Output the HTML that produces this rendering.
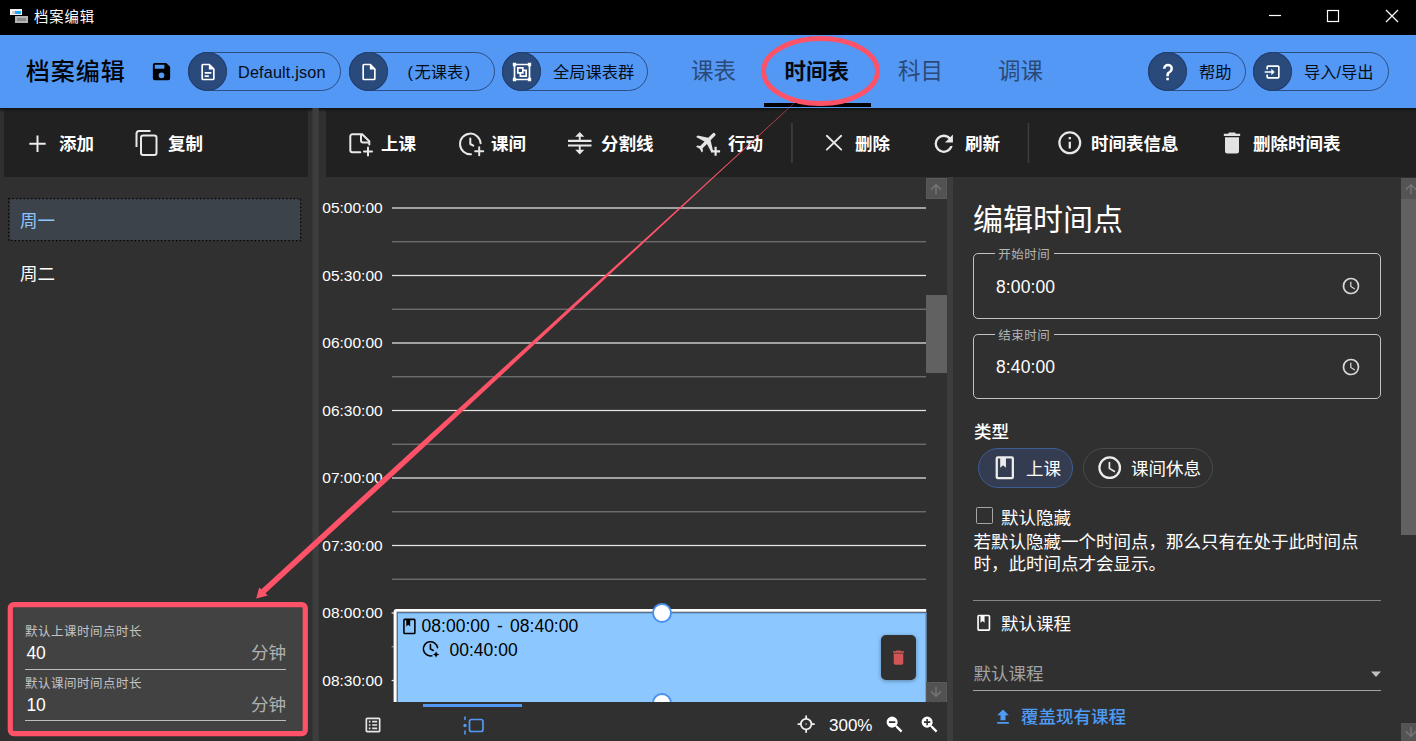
<!DOCTYPE html>
<html lang="zh-CN">
<head>
<meta charset="utf-8">
<title>档案编辑</title>
<style>
*{box-sizing:border-box;margin:0;padding:0}
html,body{width:1416px;height:741px;overflow:hidden;background:#303030}
body{font-family:"Liberation Sans","Noto Sans CJK SC",sans-serif;color:#fff;position:relative}
.abs{position:absolute}
.t{position:absolute;white-space:nowrap;line-height:1}
svg{position:absolute;overflow:visible}
#titlebar{left:0;top:0;width:1416px;height:35px;background:#000}
#header{left:0;top:35px;width:1416px;height:73px;background:#5398f5;box-shadow:0 1px 3px rgba(0,0,0,.55)}
.chip{position:absolute;top:52px;height:39.300px;border:1px solid #2d4e84;border-radius:20px}
.chip i{position:absolute;left:-1px;top:-1px;width:39.300px;height:39.300px;border-radius:20px;background:#2a4a7c;box-shadow:inset 0 0 0 1px #223f70}
.chip span{position:absolute;top:11px;font-size:16.25px;line-height:1;color:#060c18;white-space:nowrap}
.tab{font-size:22.5px;color:#2b4a78}
.tbar{background:#212121}
.tb{font-size:17.5px;font-weight:bold;color:#fff;top:136px}
.tl{font-size:15.5px;color:#fff;left:322.3px}
.hl{position:absolute;left:392px;width:534px;height:1.400px}
.maj{background:#dedede}
.min{background:#707070}
</style>
</head>
<body>
<!-- window title bar -->
<div id="titlebar" class="abs"></div>
<div class="abs" style="left:10px;top:9px;width:12px;height:6.400px;background:#f2f2f2"></div>
<div class="abs" style="left:11.500px;top:10.600px;width:3px;height:3.600px;background:#cfcfcf"></div>
<div class="abs" style="left:15.200px;top:10.600px;width:6.300px;height:3.600px;background:#1ea7f5"></div>
<div class="abs" style="left:15.200px;top:16px;width:12.800px;height:6.500px;background:#b4b4b4"></div>
<div class="abs" style="left:16.800px;top:17.600px;width:9.700px;height:3.300px;background:#8c8c8c"></div>
<div class="t" style="left:33.900px;top:9.500px;font-size:14.300px;letter-spacing:1px;color:#fff">档案编辑</div>
<svg style="left:1263px;top:4px" width="150" height="26" viewBox="0 0 150 26">
  <path d="M6 11.5H18" stroke="#fff" stroke-width="1.2" fill="none"/>
  <rect x="64.5" y="6.5" width="11" height="11" stroke="#fff" stroke-width="1.2" fill="none"/>
  <path d="M123 6L135 18M135 6L123 18" stroke="#fff" stroke-width="1.2" fill="none"/>
</svg>

<!-- header -->
<div id="header" class="abs"></div>
<div class="t" style="left:25.800px;top:60.200px;font-size:24px;letter-spacing:1px;font-weight:500;color:#02040a">档案编辑</div>
<svg style="left:150px;top:60px" width="23" height="23" viewBox="0 0 24 24"><path fill="#000" d="M15,9H5V5H15M12,19A3,3 0 0,1 9,16A3,3 0 0,1 12,13A3,3 0 0,1 15,16A3,3 0 0,1 12,19M17,3H5C3.89,3 3,3.9 3,5V19A2,2 0 0,0 5,21H19A2,2 0 0,0 21,19V7L17,3Z"/></svg>

<div class="chip" style="left:188px;width:153px"><i></i><span style="left:49px;letter-spacing:.15px">Default.json</span></div>
<div class="chip" style="left:349px;width:146px"><i></i><span style="left:57.500px">(<b style="font-weight:normal;margin:0 1.500px">无课表</b>)</span></div>
<div class="chip" style="left:502px;width:146px"><i></i><span style="left:50px">全局课表群</span></div>
<div class="chip" style="left:1148px;width:98px"><i></i><span style="left:50px">帮助</span></div>
<div class="chip" style="left:1253px;width:136px"><i></i><span style="left:50px">导入/导出</span></div>
<svg style="left:198px;top:62px" width="20" height="20" viewBox="0 0 24 24"><path fill="#fff" d="M6,2A2,2 0 0,0 4,4V20A2,2 0 0,0 6,22H18A2,2 0 0,0 20,20V8L14,2H6M6,4H13V9H18V20H6V4M8,12V14H16V12H8M8,16V18H13V16H8Z"/></svg>
<svg style="left:359px;top:62px" width="20" height="20" viewBox="0 0 24 24"><path fill="#fff" d="M14,2H6A2,2 0 0,0 4,4V20A2,2 0 0,0 6,22H18A2,2 0 0,0 20,20V8L14,2M18,20H6V4H13V9H18V20Z"/></svg>
<svg style="left:512px;top:62px" width="20" height="20" viewBox="0 0 24 24"><path fill="#fff" d="M1,1V5H2V19H1V23H5V22H19V23H23V19H22V5H23V1H19V2H5V1M5,4H19V5H20V19H19V20H5V19H4V5H5M6,6V14H9V18H18V9H14V6M8,8H12V12H8M14,11H16V16H11V14H14"/></svg>
<svg style="left:1158px;top:62px" width="20" height="20" viewBox="0 0 24 24"><path fill="#fff" d="M10,19H13V22H10V19M12,2C17.35,2.22 19.68,7.62 16.5,11.67C15.67,12.67 14.33,13.33 13.67,14.17C13,15 13,16 13,17H10C10,15.33 10,13.92 10.67,12.92C11.33,11.92 12.67,11.33 13.5,10.67C15.92,8.43 15.32,5.26 12,5A3,3 0 0,0 9,8H6A6,6 0 0,1 12,2Z"/></svg>
<svg style="left:1263px;top:62px" width="20" height="20" viewBox="0 0 24 24"><path fill="#fff" d="M14,12L10,8V11H2V13H10V16M20,18V6C20,4.89 19.1,4 18,4H6A2,2 0 0,0 4,6V9H6V6H18V18H6V15H4V18A2,2 0 0,0 6,20H18A2,2 0 0,0 20,18Z"/></svg>

<div class="t tab" style="left:691px;top:61px">课表</div>
<div class="t tab" style="left:784.5px;top:61.5px;font-size:21.5px;font-weight:bold;color:#05080f">时间表</div>
<div class="t tab" style="left:898px;top:61px">科目</div>
<div class="t tab" style="left:998px;top:61px">调课</div>
<div class="abs" style="left:763.500px;top:103px;width:107.500px;height:4px;background:#000"></div>

<!-- toolbars -->
<div class="abs tbar" style="left:4px;top:108px;width:304px;height:69px"></div>
<div class="abs tbar" style="left:326px;top:108px;width:1090px;height:69px"></div>
<div class="abs" style="left:0;top:108px;width:1416px;height:4px;background:linear-gradient(rgba(0,0,0,.45),rgba(0,0,0,0))"></div>
<!-- splitters -->
<svg style="left:0;top:0" width="1416" height="741" viewBox="0 0 1416 741"><rect x="312.500" y="108" width="6.300" height="633" fill="#3d3d3d"/><rect x="947.200" y="177" width="5.800" height="564" fill="#3d3d3d"/></svg>


<!-- sidebar -->
<svg style="left:29px;top:135px" width="18" height="18" viewBox="0 0 18 18"><path d="M8.500 0.600V17M0.300 8.800H16.700" stroke="#ececec" stroke-width="2" fill="none"/></svg>
<div class="t tb" style="left:59px">添加</div>
<svg style="left:134px;top:129px" width="27" height="29" viewBox="0 0 27 29"><path fill="none" stroke="#e8e8e8" stroke-width="2" d="M2.500 18V4.500a2.500 2.500 0 0 1 2.500-2.500H16.500"/><rect x="7" y="6.500" width="15.500" height="19.500" rx="2.200" fill="none" stroke="#e8e8e8" stroke-width="2"/></svg>
<div class="t tb" style="left:168px">复制</div>
<div class="abs" style="left:9.700px;top:199.300px;width:290px;height:40.600px;background:#3d434b;border-radius:2.500px"></div>
<svg style="left:8px;top:198px" width="293" height="43" viewBox="0 0 293 43"><rect x="0.650" y="0.650" width="292" height="42" fill="none" stroke="#000" stroke-width="1.250" stroke-dasharray="1.250 2.500"/></svg>
<div class="t" style="left:20px;top:213px;font-size:17.5px;color:#8ec5ff">周一</div>
<div class="t" style="left:20px;top:266px;font-size:17.5px;color:#fff">周二</div>
<div class="abs" style="left:13px;top:607px;width:290px;height:124px;background:#424242"></div>
<div class="t" style="left:25px;top:626.400px;font-size:12.500px;letter-spacing:.5px;color:#c4c4c4">默认上课时间点时长</div>
<div class="t" style="left:26.400px;top:645px;font-size:17.5px;color:#fff">40</div>
<div class="t" style="left:251px;top:645px;font-size:17.5px;color:#b0b0b0">分钟</div>
<div class="abs" style="left:25px;top:669px;width:261px;height:1px;background:#bdbdbd"></div>
<div class="t" style="left:25px;top:678.400px;font-size:12.500px;letter-spacing:.5px;color:#c4c4c4">默认课间时间点时长</div>
<div class="t" style="left:26.400px;top:697px;font-size:17.5px;color:#fff">10</div>
<div class="t" style="left:251px;top:697px;font-size:17.5px;color:#b0b0b0">分钟</div>
<div class="abs" style="left:25px;top:720px;width:261px;height:1px;background:#bdbdbd"></div>

<!-- middle toolbar -->
<svg style="left:348px;top:131px" width="27" height="27" viewBox="0 0 27 27"><path fill="none" stroke="#e8e8e8" stroke-width="2" stroke-linejoin="round" stroke-linecap="round" d="M12.300 21.300H4.300a2 2 0 0 1-2-2V5.300a2 2 0 0 1 2-2H14.200L21.300 10.200V13.500M13 3.600V9.600a2 2 0 0 0 2 2H21M20 16.600V24.600M16 20.600H24"/></svg>
<div class="t tb" style="left:381px">上课</div>
<svg style="left:457.500px;top:131px" width="28" height="28" viewBox="0 0 28 28"><path fill="none" stroke="#e8e8e8" stroke-width="2" stroke-linecap="round" stroke-linejoin="round" d="M22.600 12.200A10.300 10.300 0 1 0 13 23.200M12.300 7.500V13L15.300 14.600M21.200 16.300V24.300M17.200 20.300H25.200"/></svg>
<div class="t tb" style="left:491px">课间</div>
<svg style="left:568px;top:132px" width="24" height="23" viewBox="0 0 24 23"><path fill="#e8e8e8" d="M11.750 0L16.300 4.800H12.700V7.800H23.500V10H0V7.800H10.800V4.800H7.200ZM0 12.400H23.500V14.600H12.700V17.700H16.300L11.750 22.500L7.200 17.700H10.800V14.600H0Z"/></svg>
<div class="t tb" style="left:601px">分割线</div>
<svg style="left:692px;top:128px" width="30" height="30" viewBox="0 0 30 30"><g transform="translate(15 13.500) rotate(45) scale(1.140) translate(-11.500 -12)"><path fill="#e4e4e4" d="M21,16V14L13,9V3.500A1.500,1.500 0 0,0 11.500,2A1.500,1.500 0 0,0 10,3.500V9L2,14V16L10,13.500V19L8,20.500V22L11.500,21L15,22V20.500L13,19V13.500L21,16Z"/></g><path d="M23.600 18.800V27.800M19.100 23.300H28.100" stroke="#e8e8e8" stroke-width="2.200" fill="none"/></svg>
<div class="t tb" style="left:728px">行动</div>
<svg style="left:785px;top:120px" width="12" height="46" viewBox="0 0 12 46"><rect x="6" y="3" width="1.800" height="40" fill="#3c3c3c"/></svg>
<svg style="left:825.800px;top:135.400px" width="16" height="15.400" viewBox="0 0 16 15.400"><path d="M0.800 0.800L15.200 14.600M15.200 0.800L0.800 14.600" stroke="#e6e6e6" stroke-width="1.900" stroke-linecap="round" fill="none"/></svg>
<div class="t tb" style="left:855px">删除</div>
<svg style="left:930px;top:130px" width="27.500" height="27.500" viewBox="0 0 24 24"><path fill="#e8e8e8" d="M17.65,6.35C16.2,4.9 14.21,4 12,4A8,8 0 0,0 4,12A8,8 0 0,0 12,20C15.73,20 18.84,17.45 19.73,14H17.65C16.83,16.33 14.61,18 12,18A6,6 0 0,1 6,12A6,6 0 0,1 12,6C13.66,6 15.14,6.690 16.22,7.780L13,11H20V4L17.650,6.350Z"/></svg>
<div class="t tb" style="left:965px">刷新</div>
<svg style="left:1022px;top:120px" width="12" height="46" viewBox="0 0 12 46"><rect x="5.600" y="3" width="1.600" height="40" fill="#3c3c3c"/></svg>
<svg style="left:1056.100px;top:129.400px" width="27.600" height="27.600" viewBox="0 0 24 24"><path fill="#e8e8e8" d="M11,9H13V7H11M12,20C7.590,20 4,16.410 4,12C4,7.590 7.590,4 12,4C16.410,4 20,7.590 20,12C20,16.410 16.410,20 12,20M12,2A10,10 0 0,0 2,12A10,10 0 0,0 12,22A10,10 0 0,0 22,12A10,10 0 0,0 12,2M11,17H13V11H11V17Z"/></svg>
<div class="t tb" style="left:1091px">时间表信息</div>
<svg style="left:1218.300px;top:129.300px" width="28" height="28" viewBox="0 0 24 24"><path fill="#e2e2e2" d="M19,4H15.500L14.500,3H9.500L8.500,4H5V6H19M6,19A2,2 0 0,0 8,21H16A2,2 0 0,0 18,19V7H6V19Z"/></svg>
<div class="t tb" style="left:1253px">删除时间表</div>

<!-- timeline -->
<svg style="left:0;top:0" width="1416" height="741" viewBox="0 0 1416 741"><rect x="392" y="207.375" width="534" height="1.250" fill="#e4e4e4"/><rect x="392" y="241.125" width="534" height="1.250" fill="#747474"/><rect x="392" y="274.875" width="534" height="1.250" fill="#e4e4e4"/><rect x="392" y="308.625" width="534" height="1.250" fill="#747474"/><rect x="392" y="342.375" width="534" height="1.250" fill="#e4e4e4"/><rect x="392" y="376.125" width="534" height="1.250" fill="#747474"/><rect x="392" y="409.875" width="534" height="1.250" fill="#e4e4e4"/><rect x="392" y="443.625" width="534" height="1.250" fill="#747474"/><rect x="392" y="477.375" width="534" height="1.250" fill="#e4e4e4"/><rect x="392" y="511.125" width="534" height="1.250" fill="#747474"/><rect x="392" y="544.875" width="534" height="1.250" fill="#e4e4e4"/><rect x="392" y="578.625" width="534" height="1.250" fill="#747474"/></svg>
<div class="t tl" style="top:200.0px">05:00:00</div>
<div class="t tl" style="top:267.5px">05:30:00</div>
<div class="t tl" style="top:335.0px">06:00:00</div>
<div class="t tl" style="top:402.5px">06:30:00</div>
<div class="t tl" style="top:470.0px">07:00:00</div>
<div class="t tl" style="top:537.5px">07:30:00</div>
<div class="t tl" style="top:605.0px">08:00:00</div>
<div class="t tl" style="top:672.5px">08:30:00</div>



<svg style="left:0;top:0" width="1416" height="741" viewBox="0 0 1416 741"><rect x="391.600" y="612.400" width="3" height="1.250" fill="#e8e8e8"/><rect x="391.600" y="646.100" width="3" height="1.250" fill="#8e8e8e"/><rect x="391.600" y="679.900" width="3" height="1.250" fill="#e0e0e0"/><path d="M393.600 703V612a3 3 0 0 1 3-3H926.200V703Z" fill="#fff"/><rect x="396.600" y="611.700" width="529.600" height="92" fill="#5b5f66"/><rect x="397.800" y="612.900" width="528.400" height="91" fill="#8cc8ff"/><rect x="397.800" y="612.900" width="528.400" height="1" fill="#6aaaf6"/><rect x="925.200" y="612.900" width="1" height="91" fill="#5c9cf0"/></svg>


<svg style="left:399.900px;top:617px" width="18.800" height="18.800" viewBox="0 0 24 24"><path fill="#000" d="M18,2A2,2 0 0,1 20,4V20A2,2 0 0,1 18,22H6A2,2 0 0,1 4,20V4A2,2 0 0,1 6,2H18M18,4H13V12L10.500,9.750L8,12V4H6V20H18V4Z"/></svg>
<div class="t" style="left:421.600px;top:618px;font-size:17.5px;word-spacing:2.400px;color:#000">08:00:00 - 08:40:00</div>
<svg style="left:422.300px;top:640px" width="17.800" height="17.800" viewBox="0 0 19 19"><path fill="none" stroke="#000" stroke-width="1.7" stroke-linecap="round" stroke-linejoin="round" d="M16.6 8.2A7.6 7.6 0 1 0 10.5 16.9M9 4.8V9.6L12 11.2"/><path fill="#000" d="M15 12L16 14.5L18.500 15.500L16 16.500L15 19L14 16.500L11.500 15.500L14 14.500Z"/></svg>
<div class="t" style="left:449.500px;top:642px;font-size:17.5px;color:#000">00:40:00</div>
<div class="abs" style="left:881px;top:635px;width:35px;height:45px;background:#303030;border-radius:5px;box-shadow:0 1px 4px rgba(0,0,0,.35)"></div>
<svg style="left:889px;top:648px" width="19" height="19" viewBox="0 0 24 24"><path fill="#d25555" d="M19,4H15.500L14.500,3H9.500L8.500,4H5V6H19M6,19A2,2 0 0,0 8,21H16A2,2 0 0,0 18,19V7H6V19Z"/></svg>
<div class="abs" style="left:652px;top:603px;width:20px;height:20px;border-radius:10px;background:#fff;border:2px solid #4a90ee"></div>
<div class="abs" style="left:652px;top:693px;width:20px;height:20px;border-radius:10px;background:#fff;border:2px solid #4a90ee"></div>
<!-- scrollbar -->
<div class="abs" style="left:926px;top:178px;width:21px;height:21px;background:#525252;border:1px solid #5a5a5a"></div>
<svg style="left:929px;top:181px" width="15" height="15" viewBox="0 0 15 15"><path d="M7 13V4.200M2 8.600L7 3.700L12 8.600" stroke="#747474" stroke-width="1.500" fill="none"/></svg>
<div class="abs" style="left:926px;top:295px;width:21px;height:78px;background:#616161"></div>
<div class="abs" style="left:926px;top:682px;width:21px;height:21px;background:#525252;border:1px solid #5a5a5a"></div>
<svg style="left:929px;top:685px" width="15" height="15" viewBox="0 0 15 15"><path d="M7 2V10.800M2 6.400L7 11.300L12 6.400" stroke="#747474" stroke-width="1.500" fill="none"/></svg>
<!-- bottom bar -->
<div class="abs" style="left:319px;top:702px;width:628px;height:39px;background:#303030"></div>
<div class="abs" style="left:423px;top:704px;width:99px;height:3px;background:#5398f5"></div>
<svg style="left:363px;top:715px" width="20" height="20" viewBox="0 0 24 24"><path fill="#e6e6e6" d="M11 15H17V17H11V15M9 7H7V9H9V7M11 13H17V11H11V13M11 9H17V7H11V9M9 11H7V13H9V11M21 5V19C21 20.100 20.100 21 19 21H5C3.900 21 3 20.100 3 19V5C3 3.900 3.900 3 5 3H19C20.100 3 21 3.900 21 5M19 5H5V19H19V5M9 15H7V17H9V15Z"/></svg>
<svg style="left:463px;top:716px" width="22" height="19" viewBox="0 0 22 19"><path d="M2 0.500V4M2 14.500V18.500" stroke="#5398f5" stroke-width="1.6" fill="none"/><circle cx="2" cy="9.500" r="1.700" fill="#5398f5"/><rect x="6.500" y="3.500" width="13.500" height="12" rx="2" fill="none" stroke="#5398f5" stroke-width="1.700"/></svg>
<svg style="left:796px;top:714px" width="21" height="21" viewBox="0 0 21 21"><circle cx="10.150" cy="10.100" r="5.300" fill="none" stroke="#f2f2f2" stroke-width="1.800"/><path d="M10.150 1.500V5M10.150 15.200V18.700M1.600 10.100H5M15.300 10.100H18.700" stroke="#f2f2f2" stroke-width="1.800" fill="none"/><circle cx="10.150" cy="10.100" r="1" fill="#8a8a8a"/></svg>
<div class="t" style="left:829px;top:717px;font-size:17px;color:#fff">300%</div>
<svg style="left:885px;top:715px" width="19" height="19" viewBox="0 0 24 24"><path fill="#fff" d="M9,2A7,7 0 0,1 16,9C16,10.570 15.500,12 14.610,13.190L15.410,14H16L22,20L20,22L14,16V15.410L13.190,14.610C12,15.500 10.570,16 9,16A7,7 0 0,1 2,9A7,7 0 0,1 9,2M5,8V10H13V8H5Z"/></svg>
<svg style="left:920px;top:715px" width="19" height="19" viewBox="0 0 24 24"><path fill="#fff" d="M9,2A7,7 0 0,1 16,9C16,10.570 15.500,12 14.610,13.190L15.410,14H16L22,20L20,22L14,16V15.410L13.190,14.610C12,15.500 10.570,16 9,16A7,7 0 0,1 2,9A7,7 0 0,1 9,2M8,5V8H5V10H8V13H10V10H13V8H10V5H8Z"/></svg>

<!-- right panel -->
<div class="t" style="left:973px;top:204.500px;font-size:30px;color:#fff">编辑时间点</div>
<div class="abs" style="left:973px;top:253px;width:408px;height:66px;border:1px solid #c2c2c2;border-radius:5px"></div>
<div class="abs" style="left:995px;top:252px;width:59px;height:3px;background:#303030"></div>
<div class="t" style="left:998.300px;top:248.600px;font-size:12.500px;letter-spacing:.5px;color:#b4b4b4">开始时间</div>
<div class="t" style="left:996px;top:279px;font-size:17.5px;letter-spacing:.1px;color:#fff">8:00:00</div>
<svg style="left:1341px;top:276px" width="20" height="20" viewBox="0 0 24 24"><path fill="#d8d8d8" d="M12,20A8,8 0 0,0 20,12A8,8 0 0,0 12,4A8,8 0 0,0 4,12A8,8 0 0,0 12,20M12,2A10,10 0 0,1 22,12A10,10 0 0,1 12,22C6.470,22 2,17.500 2,12A10,10 0 0,1 12,2M12.500,7V12.250L17,14.920L16.250,16.150L11,13V7H12.500Z"/></svg>
<div class="abs" style="left:973px;top:334px;width:408px;height:65px;border:1px solid #c2c2c2;border-radius:5px"></div>
<div class="abs" style="left:995px;top:333px;width:59px;height:3px;background:#303030"></div>
<div class="t" style="left:998.300px;top:329.600px;font-size:12.500px;letter-spacing:.5px;color:#b4b4b4">结束时间</div>
<div class="t" style="left:996px;top:359px;font-size:17.5px;letter-spacing:.1px;color:#fff">8:40:00</div>
<svg style="left:1341px;top:357px" width="20" height="20" viewBox="0 0 24 24"><path fill="#d8d8d8" d="M12,20A8,8 0 0,0 20,12A8,8 0 0,0 12,4A8,8 0 0,0 4,12A8,8 0 0,0 12,20M12,2A10,10 0 0,1 22,12A10,10 0 0,1 12,22C6.470,22 2,17.500 2,12A10,10 0 0,1 12,2M12.500,7V12.250L17,14.920L16.250,16.150L11,13V7H12.500Z"/></svg>
<div class="t" style="left:974px;top:424px;font-size:17.5px;font-weight:500;color:#fff">类型</div>
<div class="abs" style="left:978px;top:448px;width:95px;height:40px;border-radius:20px;background:#343c51;border:1px solid #3d5d92"></div>
<svg style="left:991.200px;top:454px" width="27.600" height="27.600" viewBox="0 0 24 24"><path fill="#ececec" d="M18,2A2,2 0 0,1 20,4V20A2,2 0 0,1 18,22H6A2,2 0 0,1 4,20V4A2,2 0 0,1 6,2H18M18,4H13V12L10.500,9.750L8,12V4H6V20H18V4Z"/></svg>
<div class="t" style="left:1026px;top:460.500px;font-size:17.5px;color:#fff">上课</div>
<div class="abs" style="left:1083px;top:448px;width:130px;height:40px;border-radius:20px;border:1px solid #4a4a4a"></div>
<svg style="left:1095.700px;top:454.300px" width="27.400" height="27.400" viewBox="0 0 24 24"><path fill="#ececec" d="M12,20A8,8 0 0,0 20,12A8,8 0 0,0 12,4A8,8 0 0,0 4,12A8,8 0 0,0 12,20M12,2A10,10 0 0,1 22,12A10,10 0 0,1 12,22C6.470,22 2,17.500 2,12A10,10 0 0,1 12,2M12.500,7V12.250L17,14.920L16.250,16.150L11,13V7H12.500Z"/></svg>
<div class="t" style="left:1131px;top:460.500px;font-size:17.5px;color:#fff">课间休息</div>
<div class="abs" style="left:975.700px;top:507.200px;width:17.300px;height:17.300px;border:1.800px solid #a6a6a6;border-radius:1.500px"></div>
<div class="t" style="left:1001px;top:509.500px;font-size:17.5px;color:#fff">默认隐藏</div>
<div class="t" style="left:973.500px;top:533.500px;font-size:17.5px;color:#fff">若默认隐藏一个时间点，那么只有在处于此时间点</div>
<div class="t" style="left:973.500px;top:556.200px;font-size:17.5px;color:#fff">时，此时间点才会显示。</div>
<div class="abs" style="left:973px;top:600px;width:408px;height:1px;background:#858585"></div>
<svg style="left:973.800px;top:613.300px" width="19.500" height="19.500" viewBox="0 0 24 24"><path fill="#fff" d="M18,2A2,2 0 0,1 20,4V20A2,2 0 0,1 18,22H6A2,2 0 0,1 4,20V4A2,2 0 0,1 6,2H18M18,4H13V12L10.500,9.750L8,12V4H6V20H18V4Z"/></svg>
<div class="t" style="left:1001px;top:615.500px;font-size:17.5px;color:#fff">默认课程</div>
<div class="t" style="left:973.500px;top:665.500px;font-size:17.5px;color:#a2a2a2">默认课程</div>
<svg style="left:1370px;top:670.800px" width="12" height="7" viewBox="0 0 12 7"><path fill="#bdbdbd" d="M1 .5H11L6 6Z"/></svg>
<div class="abs" style="left:973px;top:690px;width:408px;height:1px;background:#a4a4a4"></div>
<svg style="left:993px;top:706.700px" width="20" height="20" viewBox="0 0 24 24"><path fill="#4f9cf7" d="M9,16V10H5L12,3L19,10H15V16H9M5,20V18H19V20H5Z"/></svg>
<div class="t" style="left:1021px;top:708.500px;font-size:17.5px;font-weight:500;color:#4f9cf7">覆盖现有课程</div>
<!-- right scrollbar -->
<div class="abs" style="left:1401px;top:178px;width:15px;height:21px;background:#545454"></div>
<svg style="left:1404px;top:181px" width="15" height="15" viewBox="0 0 15 15"><path d="M7 13V4.200M2 8.600L7 3.700L12 8.600" stroke="#747474" stroke-width="1.500" fill="none"/></svg>
<div class="abs" style="left:1401px;top:199px;width:15px;height:336px;background:#616161"></div>
<div class="abs" style="left:1401px;top:723px;width:15px;height:18px;background:#545454"></div>
<svg style="left:1404px;top:725px" width="15" height="15" viewBox="0 0 15 15"><path d="M7 2V10.800M2 6.400L7 11.300L12 6.400" stroke="#747474" stroke-width="1.500" fill="none"/></svg>

<!-- annotations -->
<svg style="left:0;top:0" width="1416" height="741" viewBox="0 0 1416 741">
<ellipse cx="820.5" cy="71.1" rx="57" ry="32.5" fill="none" stroke="#fd5268" stroke-width="5"/>
<polygon points="795.1,102.0 731.0,160.6 602.6,277.6 527.6,345.7 409.9,452.9 260.6,590.0 264.4,594.2 413.5,456.9 530.1,348.5 604.3,279.4 731.5,161.2 795.3,102.2" fill="#fd5268"/>
<polygon points="256.200,598.600 259.200,587.500 267.800,595.600" fill="#fd5268"/>
<rect x="10.300" y="604.600" width="295.000" height="129.000" rx="3.500" fill="none" stroke="#fd5268" stroke-width="5.200"/>
</svg>

</body>
</html>
